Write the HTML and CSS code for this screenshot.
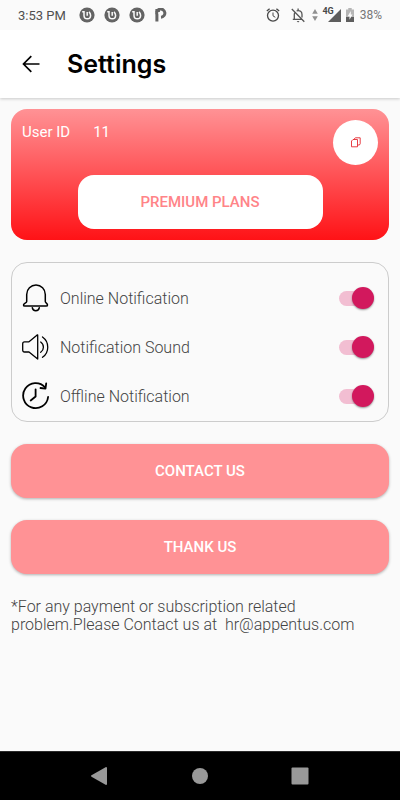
FILE: index.html
```html
<!DOCTYPE html>
<html lang="en">
<head>
<meta charset="utf-8">
<meta name="viewport" content="width=device-width, initial-scale=1">
<title>Settings</title>
<link rel="stylesheet" href="styles.css">
</head>
<body>
<svg class="defs" width="0" height="0" aria-hidden="true">
  <symbol id="loop" viewBox="0 0 16 16">
    <circle cx="8" cy="8" r="7.6" fill="#646464"/>
    <path d="M3.200 4.800h1.800v3.700a3.300 3.300 0 0 0 6.600 0c0-1.600-.5-2.600-1.600-3.600M8.200 5v3.800" fill="none" stroke="#fafafa" stroke-width="1.500"/>
  </symbol>
</svg>
<div class="screen">
  <div class="status">
    <div class="status-left">
      <span class="time">3:53 PM</span>
      <svg class="loop" aria-hidden="true"><use href="#loop"/></svg>
      <svg class="loop" aria-hidden="true"><use href="#loop"/></svg>
      <svg class="loop" aria-hidden="true"><use href="#loop"/></svg>
      <svg class="park" viewBox="0 0 12 14" aria-hidden="true"><path d="M1.900 13.500V6.500A4.100 4.100 0 1 1 6 9.200" fill="none" stroke="#646464" stroke-width="3"/><path d="M.4 1h4.500v3H.4z" fill="#646464"/></svg>
    </div>
    <div class="status-right">
      <svg class="alarm" width="14" height="14" viewBox="0 0 14 14" fill="none" stroke="#484848" aria-hidden="true"><circle cx="7" cy="7.6" r="5.5" stroke-width="1.3"/><path d="M.8 3L3.6.7M13.2 3L10.4.7" stroke-width="1.3"/><path d="M7 4.5v3.3l2.3 1.5"/></svg>
      <svg class="mute" width="14" height="15" viewBox="0 0 14 15" fill="none" stroke="#555" stroke-width="1.3" aria-hidden="true"><path d="M3.3 11V6.4c0-1 .4-1.9 1-2.5M5.6 2.8C9 1.8 11 4 11 6.4v3M1.8 11.4h8.7M7.1.5v2M.8 1l12.5 12.7"/><path d="M5.7 13h2.8L7.1 14.6z" fill="#555" stroke="none"/></svg>
      <svg class="data" width="6" height="12" viewBox="0 0 6 12" fill="#909090" aria-hidden="true"><path d="M3 0l2.8 4.8H.2zM3 12L.2 7.2h5.6z"/></svg>
      <span class="network">4G</span>
      <svg class="signal" width="13" height="13" viewBox="0 0 13 13" aria-hidden="true"><path d="M13 0v13H0z" fill="#5d5d5d"/></svg>
      <svg class="battery" width="8" height="14" viewBox="0 0 8 14" aria-hidden="true"><path d="M2.3 0h3.4v1.4H8V14H0V1.4h2.3z" fill="#b5b5b5"/><path d="M0 9h8v5H0z" fill="#5d5d5d"/><path d="M4.8 3L1.7 8.2h1.8v3.5l3-5.2H4.8z" fill="#fafafa"/></svg>
      <span class="percent">38%</span>
    </div>
  </div>

  <header class="bar">
    <button class="back" aria-label="Back"><svg width="18" height="18" viewBox="0 0 18 18" fill="none" stroke="#000" stroke-width="1.7" aria-hidden="true"><path d="M17.5 9H1.5M9.3 1.2L1.5 9l7.8 7.8"/></svg></button>
    <h1>Settings</h1>
  </header>

  <main>
    <section class="account">
      <div class="account-top">
        <span class="user"><span>User ID</span><span>11</span></span>
        <button class="copy" aria-label="Copy user ID"><svg width="10" height="11" viewBox="0 0 10 11" fill="none" stroke="#e52a32" stroke-width=".9" aria-hidden="true"><path d="M2 2.5h4.5v7.3H.5V4z"/><path d="M3 2.2L4.3.8h4.9v5.9L8.4 8H6.8"/></svg></button>
      </div>
      <button class="premium">PREMIUM PLANS</button>
    </section>

    <section class="options">
      <label class="row">
        <svg class="icon" viewBox="0 0 28 28" fill="none" stroke="#000" stroke-width="1.5" stroke-linecap="round" aria-hidden="true"><path d="M4.700 17.500V10.400a9.300 9.300 0 0 1 18.600 0v7.100c0 1.500 2.200 1.800 2.200 3.400 0 .8-.5 1.200-1.300 1.200H2.800c-.8 0-1.300-.4-1.300-1.200 0-1.600 3.200-1.900 3.200-3.400z"/><path d="M10.300 23.700c.5 4 6.500 4 7 0"/></svg>
        <span class="name">Online Notification</span>
        <input type="checkbox" role="switch" class="switch" checked>
      </label>
      <label class="row">
        <svg class="icon" viewBox="0 0 28 28" fill="none" stroke="#000" stroke-width="1.3" stroke-linejoin="round" stroke-linecap="round" aria-hidden="true"><path d="M15.700 2v24L7 19H2.500C1.300 19 .7 18.300.7 17.100v-6.400c0-1.200.6-1.900 1.800-1.900H7l7.600-6.300c.4-.3 1.100-.9 1.100-.5z"/><path d="M18.700 9c3.600 2.500 3.600 7.800 0 10.300M20.500 4c7 5 7 15.300 0 20.300"/></svg>
        <span class="name">Notification Sound</span>
        <input type="checkbox" role="switch" class="switch" checked>
      </label>
      <label class="row">
        <svg class="icon" viewBox="0 0 28 28" fill="none" stroke="#000" stroke-width="1.800" stroke-linecap="round" stroke-linejoin="round" aria-hidden="true"><path d="M26.100 15A12.500 12.500 0 1 1 23 5.300"/><path d="M24.200 1.300L23.500 6.700l-5-.7M13.600 7.300v7.200l-4.900 4"/></svg>
        <span class="name">Offline Notification</span>
        <input type="checkbox" role="switch" class="switch" checked>
      </label>
    </section>

    <button class="action">CONTACT US</button>
    <button class="action">THANK US</button>
    <p class="note">*For any payment or subscription related problem.Please Contact us at &nbsp;hr@appentus.com</p>
  </main>

  <nav class="nav" aria-label="System navigation">
    <button aria-label="Back"><svg width="18" height="18" viewBox="0 0 18 18" fill="#999" aria-hidden="true"><path d="M15 0q1 0 1 1v16q0 1-1 1L.500 9.700q-1-.7 0-1.400z"/></svg></button>
    <button aria-label="Home"><svg width="18" height="18" viewBox="0 0 18 18" fill="#999" aria-hidden="true"><circle cx="9" cy="9" r="8"/></svg></button>
    <button aria-label="Recent apps"><svg width="18" height="18" viewBox="0 0 18 18" fill="#999" aria-hidden="true"><rect x=".5" y=".5" width="17" height="17" rx="1"/></svg></button>
  </nav>
</div>
</body>
</html>
```
FILE: styles.css
```css
* { box-sizing: border-box; }

body {
  margin: 0;
  background: #fafafa;
  font-family: Roboto, "Liberation Sans", sans-serif;
  color: #444;
}

button {
  border: 0;
  padding: 0;
  font: inherit;
  cursor: pointer;
}

svg { display: block; flex: none; }

.defs { position: absolute; }

.screen {
  min-height: 100vh;
  display: flex;
  flex-direction: column;
}

.status {
  height: 30px;
  padding: 0 18px;
  display: flex;
  justify-content: space-between;
  align-items: center;
}

.status-left,
.status-right {
  display: flex;
  align-items: center;
}

.status-left { gap: 9px; }

.time {
  font-size: 13px;
  margin-right: 4px;
  color: #505050;
}

.loop { width: 16px; height: 16px; }

.park { width: 12px; height: 14px; margin-left: 1px; }

.mute { margin-left: 11px; }
.data { margin-left: 7px; }

.network {
  margin: 0 -6px 8px 4px;
  font-size: 9px;
  line-height: 10px;
  font-weight: 700;
  color: #484848;
}

.battery { margin-left: 5px; }

.percent {
  margin-left: 6px;
  font-size: 12px;
  color: #777;
}

.bar {
  height: 68px;
  padding: 0 22px;
  display: flex;
  align-items: center;
  gap: 27px;
  background: #fff;
  box-shadow: 0 1px 3px rgba(0, 0, 0, .2);
  clip-path: inset(0 0 -6px 0);
}

.back { background: none; }

h1 {
  margin: 0;
  font-family: Inter, "Open Sans", sans-serif;
  font-size: 25px;
  line-height: 30px;
  font-weight: 600;
  color: #000;
}

main {
  flex: 1;
  display: flex;
  flex-direction: column;
  gap: 22px;
  padding: 11px;
}

.account {
  padding: 11px;
  border-radius: 16px;
  background: linear-gradient(#ff9295, #ff1216);
}

.account-top {
  display: flex;
  justify-content: space-between;
  align-items: flex-start;
}

.user {
  display: flex;
  gap: 23px;
  padding-top: 2px;
  font-size: 15px;
  line-height: 20px;
  color: #fff;
}

.copy {
  width: 45px;
  height: 45px;
  border-radius: 50%;
  background: #fff;
  display: grid;
  place-items: center;
}

.premium {
  display: block;
  width: 65%;
  min-width: 245px;
  height: 54px;
  margin: 10px auto 0;
  border-radius: 16px;
  background: #fff;
  color: #ff8488;
  font-size: 15px;
  font-weight: 500;
}

.options {
  padding: 21px 14px 11px 10px;
  border: 1px solid #ccc;
  border-radius: 16px;
  display: grid;
  gap: 21px;
}

.row {
  height: 28px;
  display: flex;
  align-items: center;
  gap: 10px;
}

.icon { width: 28px; height: 28px; }

.name {
  flex: 1;
  padding-top: 2px;
  font-size: 16px;
  line-height: 18px;
  font-weight: 300;
}

.switch {
  appearance: none;
  width: 35px;
  height: 22px;
  margin: 0;
  position: relative;
  display: flex;
  align-items: center;
}

.switch::before {
  content: "";
  width: 30px;
  height: 15px;
  border-radius: 8px;
  background: #f2bed2;
}

.switch::after {
  content: "";
  position: absolute;
  left: 0;
  width: 22px;
  height: 22px;
  border-radius: 50%;
  background: #d2185d;
  box-shadow: 0 1px 2px rgba(0, 0, 0, .4);
}

.switch:checked::after {
  left: auto;
  right: 0;
}

.action {
  height: 54px;
  border-radius: 16px;
  background: #ff9295;
  box-shadow: 0 1px 3px rgba(0, 0, 0, .3);
  color: #fff;
  font-size: 15px;
  font-weight: 500;
}

.note {
  margin: 2px 0 0;
  max-width: 350px;
  font-size: 16px;
  line-height: 18px;
  font-weight: 300;
}

.nav {
  height: 49px;
  border-top: 1px solid #2b2b2b;
  background: #000;
  display: flex;
  justify-content: center;
  align-items: center;
  gap: 82px;
}

.nav button { background: none; }
```
